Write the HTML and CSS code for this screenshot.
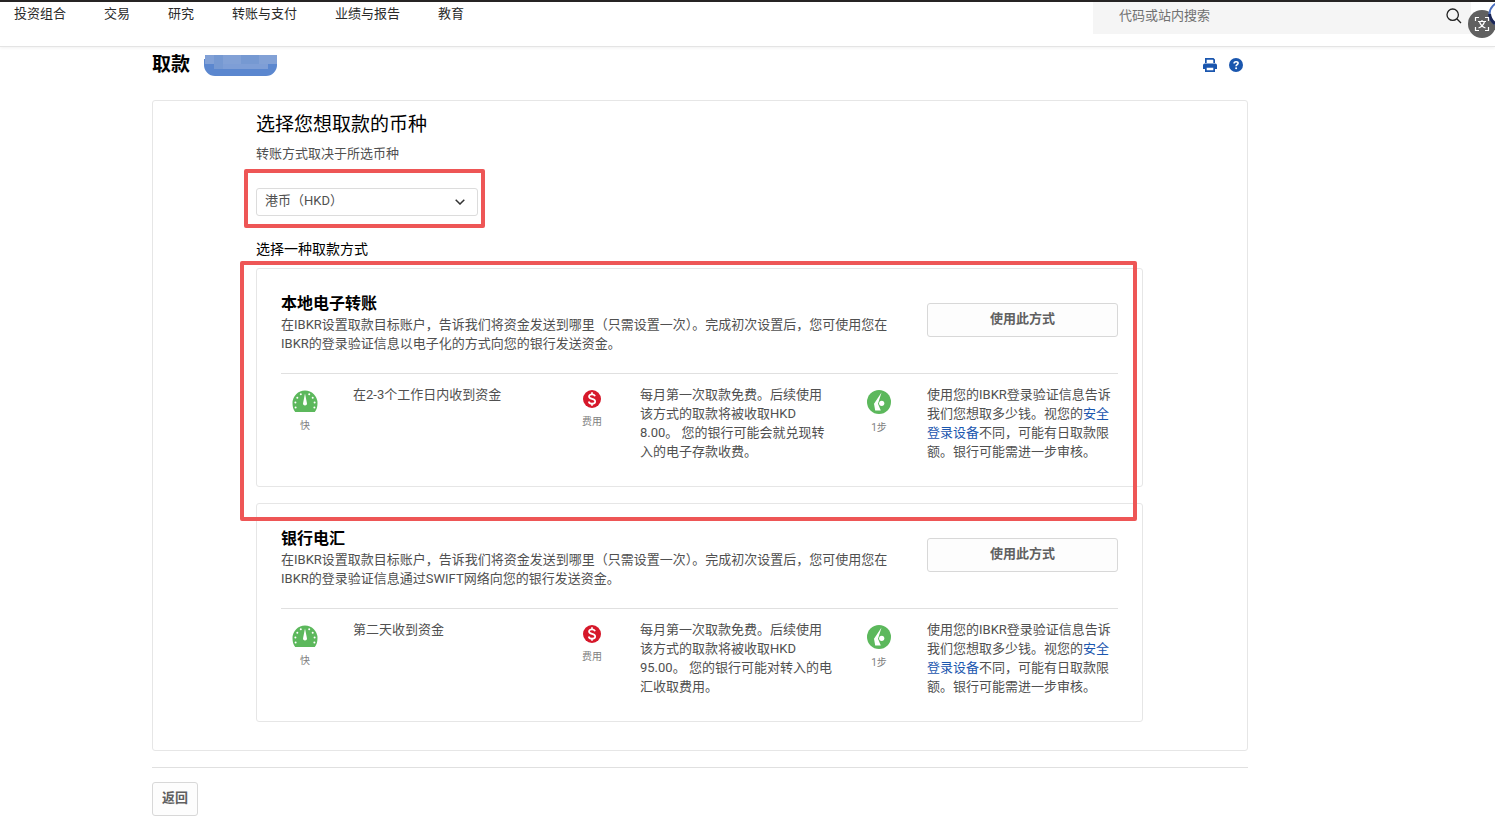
FILE: index.html
```html
<!DOCTYPE html>
<html lang="zh-CN">
<head>
    <meta charset="UTF-8">
    <title>取款</title>
    <link rel="stylesheet" href="styles.css">
</head>
<body>
    <!-- Shared icons -->
    <svg class="sprite" aria-hidden="true">
        <symbol id="icon-gauge" viewBox="0 0 26 22">
            <path fill="#5cb85c" d="M3.200 22C1.200 19.500.5 16.500.5 13a12.500 12.500 0 0 1 25 0c0 3.500-.7 6.500-2.700 9z"/>
            <path fill="#fff" d="M13 3.500l1.900 9.500a2 2 0 1 1-3.800 0z"/>
            <g fill="#fff">
                <circle cx="3.600" cy="17.500" r="1"/><circle cx="3.400" cy="12.600" r="1"/>
                <circle cx="5.300" cy="7.700" r="1"/><circle cx="8.800" cy="4.300" r="1"/>
                <circle cx="17.200" cy="4.300" r="1"/><circle cx="20.700" cy="7.700" r="1"/>
                <circle cx="22.600" cy="12.600" r="1"/><circle cx="22.400" cy="17.500" r="1"/>
            </g>
        </symbol>
        <symbol id="icon-fee" viewBox="0 0 18 18">
            <circle cx="9" cy="9" r="9" fill="#d6182a"/>
            <path fill="none" stroke="#fff" stroke-width="1.700" d="M12 6.300C11.600 4.900 10.500 4.300 9 4.300c-1.700 0-3 .8-3 2.200 0 3.200 6.200 1.500 6.200 4.900 0 1.500-1.400 2.300-3.200 2.300-1.700 0-3-.7-3.300-2.200M9 2.300v2.200M9 13.500v2.200"/>
        </symbol>
        <symbol id="icon-step" viewBox="0 0 24 24">
            <circle cx="12" cy="12" r="12" fill="#5cb85c"/>
            <path fill="#fff" d="M14.500 2.500L7 13.800l1.200 6.700h5.600L11 13.800z"/>
            <circle cx="14.700" cy="13.300" r="2.600" fill="#fff"/>
        </symbol>
    </svg>

    <header class="topbar">
        <nav class="nav">
            <a href="#">投资组合</a>
            <a href="#">交易</a>
            <a href="#">研究</a>
            <a href="#">转账与支付</a>
            <a href="#">业绩与报告</a>
            <a href="#">教育</a>
        </nav>
        <form class="search">
            <input type="text" placeholder="代码或站内搜索" aria-label="代码或站内搜索">
            <button type="button" aria-label="搜索">
                <svg width="16" height="16" viewBox="0 0 16 16" fill="none" stroke="#222" stroke-width="1.300">
                    <circle cx="6.700" cy="6.700" r="5.700"/>
                    <path d="M10.800 10.800L15 15"/>
                </svg>
            </button>
        </form>
        <div class="floating">
            <svg width="27" height="38" viewBox="0 0 27 38">
                <circle cx="14" cy="22" r="14" fill="#606060"/>
                <circle cx="33" cy="12" r="11.500" fill="#fff" stroke="#4a6fc0" stroke-width="2"/>
                <path fill="none" stroke="#1c2757" stroke-width="3" d="M21.500 12c.5 4 2 7 5.500 9.500"/>
                <g fill="none" stroke="#fff" stroke-width="1.200">
                    <path d="M7.500 19v-3.500H11M17 15.500h3.500V19M20.500 25v3.500H17M11 28.500H7.500V25"/>
                    <path d="M10 19.500h8M14 18v1.500M16.500 19.500c-.8 3.200-2.700 5.400-6 6.500M11.500 19.500c.8 3.200 2.700 5.400 6 6.500"/>
                </g>
            </svg>
        </div>
    </header>

    <main class="page">
        <div class="page-title">
            <h1>取款</h1>
            <svg width="73" height="22" viewBox="0 0 73 22" aria-hidden="true">
                <path fill="#5b87cf" d="M0 5h73v6a11 11 0 0 1-11 11H11A11 11 0 0 1 0 11z"/>
                <path fill="#82a1d6" d="M1 1h72v9H1z"/>
                <path fill="#7699d2" d="M10 1h9v14h-9zM37 1h18v9H37z"/>
                <path fill="#7e9ed6" d="M19 10h45v5H19z"/>
            </svg>
            <div class="tools">
                <button type="button" aria-label="打印">
                    <svg width="14" height="14" viewBox="0 0 14 14">
                        <path fill="#1a56ae" d="M2 0h8.500L12 1.500V5h-1.700V2.200L9.800 1.700H3.700V5H2zM1.800 5.500h10.400A1.800 1.800 0 0 1 14 7.300V11h-2v3H2v-3H0V7.300A1.800 1.800 0 0 1 1.800 5.500zM3.700 9.800v2.500h6.600V9.800z"/>
                    </svg>
                </button>
                <button type="button" aria-label="帮助">
                    <svg width="14" height="14" viewBox="0 0 14 14">
                        <circle cx="7" cy="7" r="7" fill="#1a56ae"/>
                        <path fill="none" stroke="#fff" stroke-width="1.600" d="M5.100 5.500c0-1.100.8-1.800 2-1.800s2 .7 2 1.600c0 1.400-2 1.400-2 3"/>
                        <circle cx="7.100" cy="10.300" r="1" fill="#fff"/>
                    </svg>
                </button>
            </div>
        </div>

        <section class="panel">
            <h2>选择您想取款的币种</h2>
            <label class="hint" for="currency">转账方式取决于所选币种</label>
            <div class="select-wrap">
                <select id="currency">
                    <option>港币（HKD）</option>
                </select>
                <svg class="chevron" width="10" height="6" viewBox="0 0 10 6" fill="none" stroke="#333" stroke-width="1.500">
                    <path d="M.7.7L5 5 9.300.7"/>
                </svg>
                <div class="mark mark-select"></div>
            </div>

            <h3>选择一种取款方式</h3>

            <div class="methods">
                <article class="card">
                    <div class="card-head">
                        <div>
                            <h4>本地电子转账</h4>
                            <p>在IBKR设置取款目标账户，告诉我们将资金发送到哪里（只需设置一次）。完成初次设置后，您可使用您在IBKR的登录验证信息以电子化的方式向您的银行发送资金。</p>
                        </div>
                        <button type="button" class="btn">使用此方式</button>
                    </div>
                    <div class="facts">
                        <div class="fact">
                            <div class="fact-icon">
                                <svg width="26" height="22"><use href="#icon-gauge"/></svg>
                                <span>快</span>
                            </div>
                            <p>在2-3个工作日内收到资金</p>
                        </div>
                        <div class="fact">
                            <div class="fact-icon">
                                <svg width="18" height="18"><use href="#icon-fee"/></svg>
                                <span>费用</span>
                            </div>
                            <p>每月第一次取款免费。后续使用该方式的取款将被收取HKD 8.00。 您的银行可能会就兑现转入的电子存款收费。</p>
                        </div>
                        <div class="fact">
                            <div class="fact-icon">
                                <svg width="24" height="24"><use href="#icon-step"/></svg>
                                <span>1步</span>
                            </div>
                            <p>使用您的IBKR登录验证信息告诉我们您想取多少钱。视您的<a href="#">安全登录设备</a>不同，可能有日取款限额。银行可能需进一步审核。</p>
                        </div>
                    </div>
                    <div class="mark mark-card"></div>
                </article>

                <article class="card">
                    <div class="card-head">
                        <div>
                            <h4>银行电汇</h4>
                            <p>在IBKR设置取款目标账户，告诉我们将资金发送到哪里（只需设置一次）。完成初次设置后，您可使用您在IBKR的登录验证信息通过SWIFT网络向您的银行发送资金。</p>
                        </div>
                        <button type="button" class="btn">使用此方式</button>
                    </div>
                    <div class="facts">
                        <div class="fact">
                            <div class="fact-icon">
                                <svg width="26" height="22"><use href="#icon-gauge"/></svg>
                                <span>快</span>
                            </div>
                            <p>第二天收到资金</p>
                        </div>
                        <div class="fact">
                            <div class="fact-icon">
                                <svg width="18" height="18"><use href="#icon-fee"/></svg>
                                <span>费用</span>
                            </div>
                            <p>每月第一次取款免费。后续使用该方式的取款将被收取HKD 95.00。 您的银行可能对转入的电汇收取费用。</p>
                        </div>
                        <div class="fact">
                            <div class="fact-icon">
                                <svg width="24" height="24"><use href="#icon-step"/></svg>
                                <span>1步</span>
                            </div>
                            <p>使用您的IBKR登录验证信息告诉我们您想取多少钱。视您的<a href="#">安全登录设备</a>不同，可能有日取款限额。银行可能需进一步审核。</p>
                        </div>
                    </div>
                </article>
            </div>
        </section>

        <footer class="actions">
            <button type="button" class="btn">返回</button>
        </footer>
    </main>
</body>
</html>
```
FILE: styles.css
```css
* {
    box-sizing: border-box;
}

body {
    margin: 0;
    background: #fff;
    color: #505050;
    font-family: Roboto, "Noto Sans CJK SC", sans-serif;
    font-size: 13px;
    line-height: 19px;
}

h1, h2, h3, h4, p {
    margin: 0;
    font-weight: 400;
}

h1, h2, h3, h4 {
    color: #000;
}

a {
    color: #1a56ae;
    text-decoration: none;
}

button, input, select {
    font: inherit;
    color: inherit;
}

button {
    cursor: pointer;
}

svg {
    display: block;
}

.sprite {
    position: absolute;
    width: 0;
    height: 0;
}

/* Top bar */
.topbar {
    position: relative;
    display: flex;
    justify-content: space-between;
    align-items: flex-start;
    height: 47px;
    border-top: 2px solid #262424;
    border-bottom: 1px solid #e4e4e4;
    box-shadow: 0 1px 3px rgba(0, 0, 0, 0.06);
}

.nav {
    display: flex;
    gap: 38px;
    padding: 2px 0 0 14px;
}

.nav a {
    color: #2a2a2a;
}

.search {
    display: flex;
    align-items: flex-start;
    width: 378px;
    height: 32px;
    margin-right: 24px;
    padding: 3px 9px 0 26px;
    background: #f5f5f5;
}

.search input {
    flex: 1;
    min-width: 0;
    height: 20px;
    padding: 0;
    border: 0;
    outline: 0;
    background: none;
}

.search input::placeholder {
    color: #707070;
}

.search button {
    padding: 3px 0 0;
    border: 0;
    background: none;
}

.floating {
    position: absolute;
    top: 0;
    right: 0;
}

/* Page */
.page {
    padding: 5px 247px 9px 152px;
}

.page-title {
    display: flex;
    align-items: center;
    gap: 14px;
    height: 26px;
    margin-bottom: 22px;
}

.page-title h1 {
    font-size: 19px;
    font-weight: 700;
    line-height: 24px;
}

.tools {
    display: flex;
    gap: 12px;
    margin-left: auto;
    padding-right: 5px;
}

.tools button {
    padding: 0;
    border: 0;
    background: none;
}

.panel {
    padding: 10px 104px 28px 103px;
    border: 1px solid #e6e6e6;
    border-radius: 3px;
}

.panel h2 {
    font-size: 19px;
    line-height: 28px;
}

.panel h3 {
    margin: 23px 0 9px;
    font-size: 14px;
    line-height: 20px;
}

.hint {
    display: block;
    margin: 5px 0 25px;
}

.select-wrap {
    position: relative;
    width: 222px;
}

.select-wrap select {
    display: block;
    width: 100%;
    height: 28px;
    padding: 0 30px 4px 8px;
    border: 1px solid #dcdcdc;
    border-radius: 3px;
    background: #fff;
    appearance: none;
}

.chevron {
    position: absolute;
    top: 11px;
    right: 13px;
}

/* Red highlight frames */
.mark {
    position: absolute;
    z-index: 1;
    border: 4px solid #ee5656;
    border-radius: 2px;
    pointer-events: none;
}

.mark-select {
    inset: -19px -7px -12px -12px;
}

.mark-card {
    inset: -8px 5px -35px -17px;
}

/* Withdrawal methods */
.methods {
    display: grid;
    gap: 16px;
}

.card {
    position: relative;
    padding: 24px 24px 25px;
    border: 1px solid #e6e6e6;
    border-radius: 3px;
}

.card-head {
    display: flex;
    justify-content: space-between;
    align-items: center;
    padding-bottom: 20px;
    border-bottom: 1px solid #e0e0e0;
}

.card-head > div {
    flex: 0 1 622px;
}

.card-head h4 {
    margin-bottom: 1px;
    font-size: 16px;
    font-weight: 700;
    line-height: 21px;
}

.card-head .btn {
    flex: 0 0 191px;
    margin-bottom: 6px;
}

.facts {
    display: grid;
    grid-template-columns: repeat(3, 1fr);
    gap: 24px;
    padding-top: 11px;
}

.fact {
    display: flex;
    gap: 24px;
}

.fact p {
    flex: 1;
    margin-right: -3px;
}

.fact-icon {
    display: flex;
    flex-direction: column;
    align-items: center;
    gap: 5px;
    width: 48px;
    padding-top: 5px;
    color: #808080;
    font-size: 10px;
    line-height: 18px;
}

.btn {
    height: 34px;
    padding: 0 9px 4px;
    border: 1px solid #d8d8d8;
    border-radius: 3px;
    background: #fdfdfd;
    color: #606060;
    font-weight: 700;
}

.actions {
    margin-top: 16px;
    padding-top: 14px;
    border-top: 1px solid #e0e0e0;
}
```
